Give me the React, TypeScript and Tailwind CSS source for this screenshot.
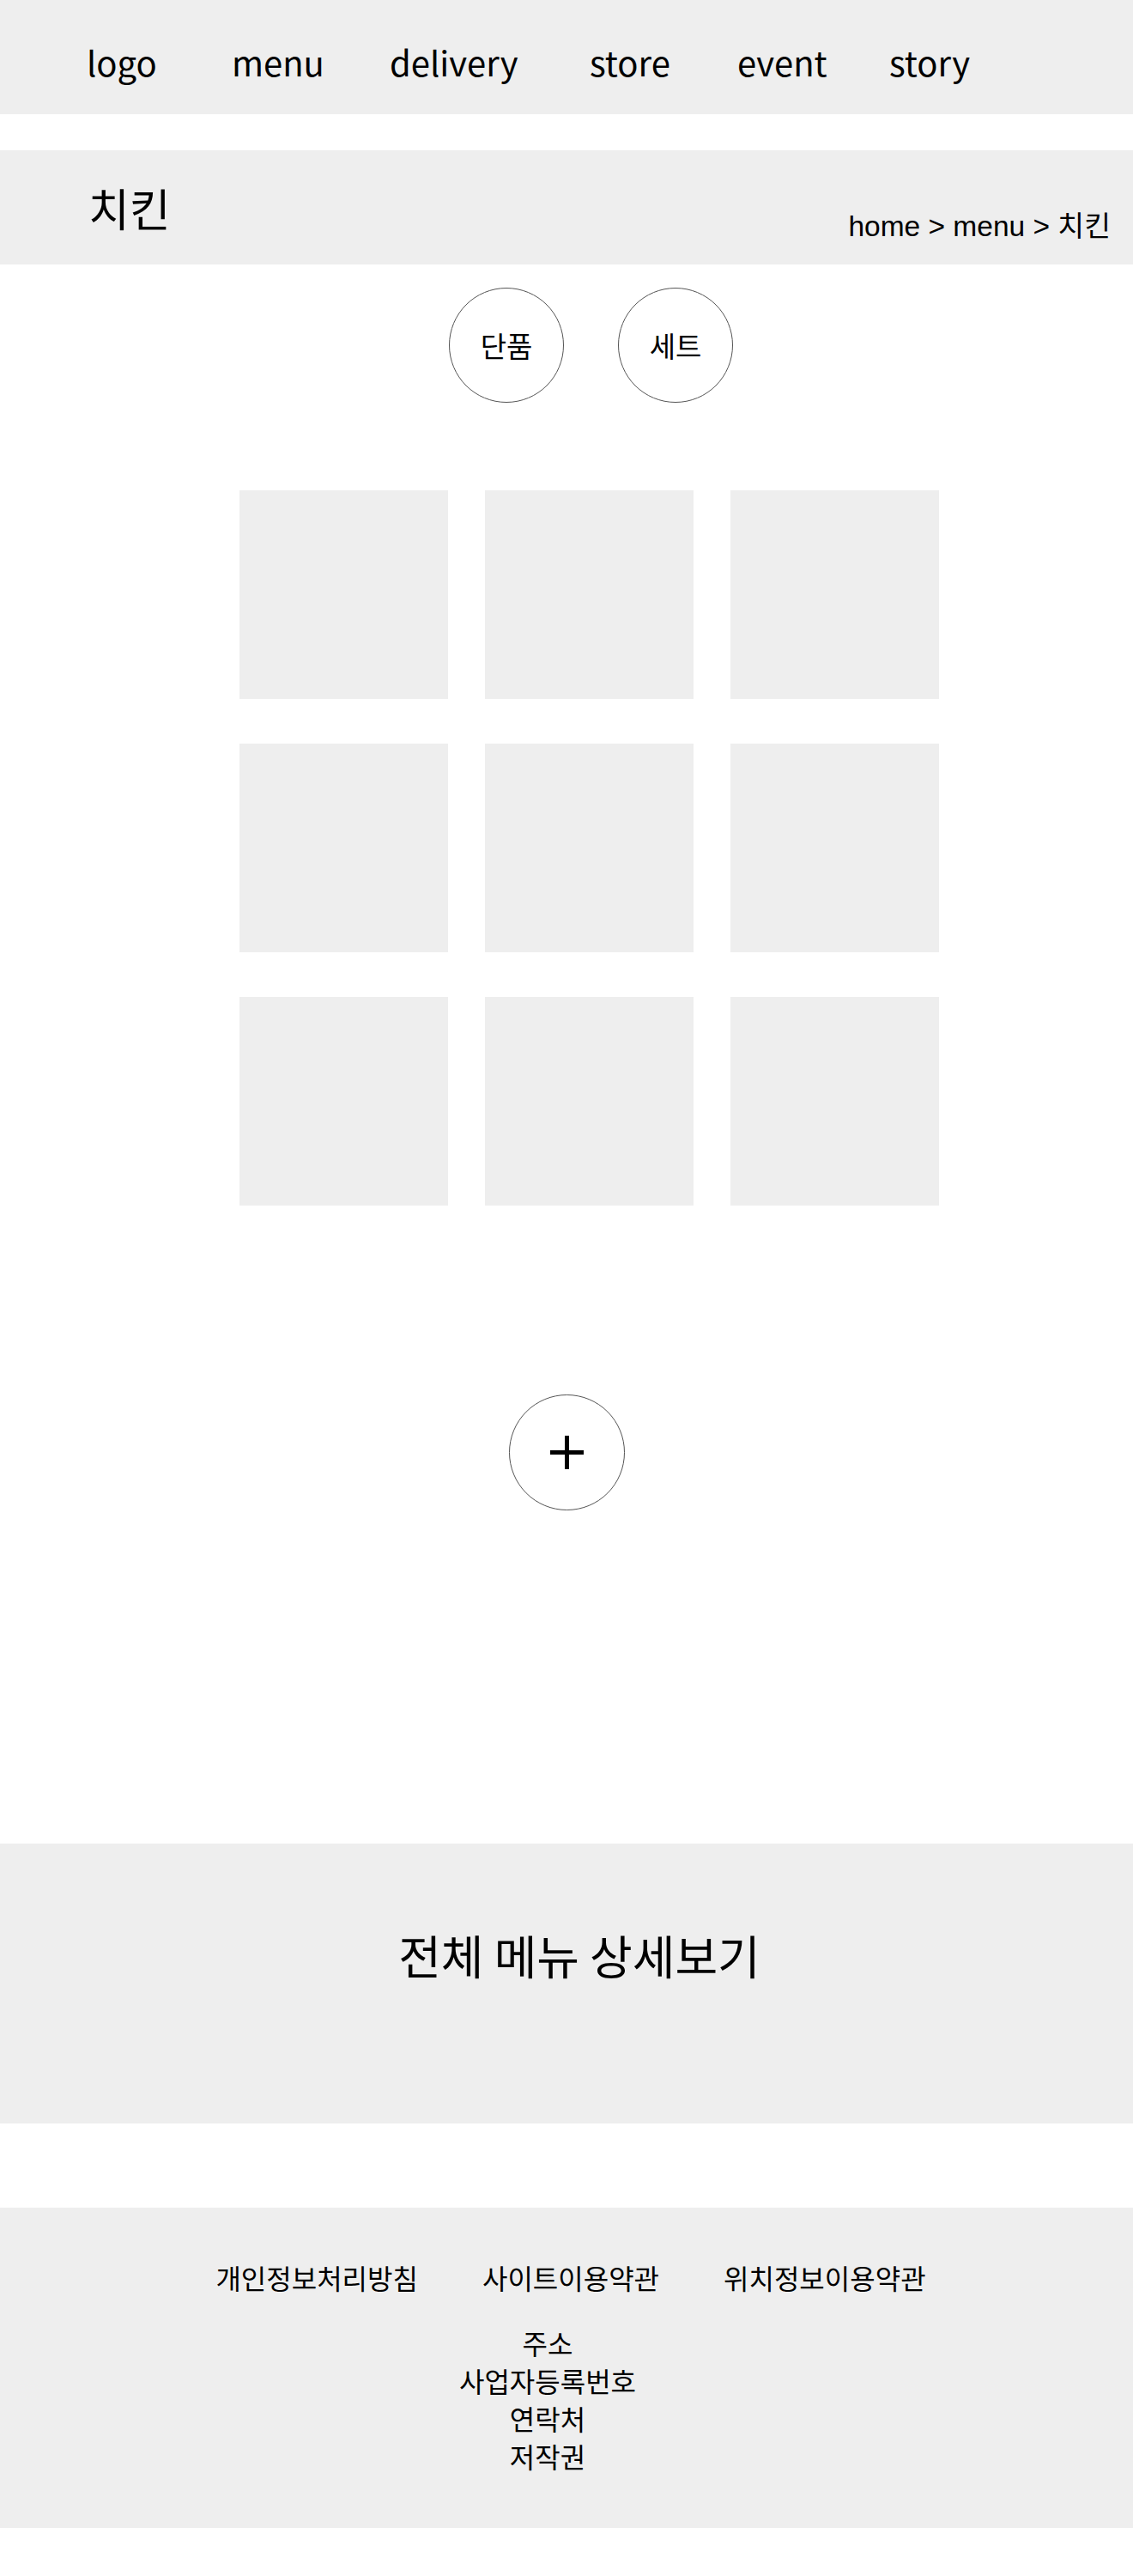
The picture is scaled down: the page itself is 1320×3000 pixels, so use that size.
const font = { fontFamily: '"Noto Sans CJK KR", "Noto Sans", sans-serif' }

const navItems = [
  { label: 'logo', w: 'w-[169px]' },
  { label: 'menu', w: 'w-[184px]' },
  { label: 'delivery', w: 'w-[233px]' },
  { label: 'store', w: 'w-[172px]' },
  { label: 'event', w: 'w-[177px]' },
  { label: 'story', w: 'w-[120px]' },
]

function Header() {
  return (
    <div className="h-[133px] bg-[#eeeeee] flex pl-[101px] pt-[42px]">
      {navItems.map((item) => (
        <a key={item.label} href="#" className={`${item.w} text-[40px] leading-[60px] text-black`}>
          {item.label}
        </a>
      ))}
    </div>
  )
}

function TitleBar() {
  return (
    <div className="mt-[42px] h-[133px] bg-[#eeeeee] flex justify-between">
      <h1 className="pl-[103px] pt-[41px] text-[52px] leading-[52px] font-normal">치킨</h1>
      <p
        className="pr-[26px] pt-[72px] text-[33.5px] leading-[34px]"
        style={{ fontFamily: '"Liberation Sans", "Noto Sans CJK KR", sans-serif' }}
      >
        home &gt; menu &gt; 치킨
      </p>
    </div>
  )
}

function Tabs() {
  return (
    <div className="mt-[27px] flex justify-center gap-[63px] pl-[57px]">
      {['단품', '세트'].map((t) => (
        <button
          key={t}
          className="w-[134px] h-[134px] rounded-full border border-[#555555] flex items-center justify-center text-[33px] leading-none"
        >
          {t}
        </button>
      ))}
    </div>
  )
}

function Grid() {
  return (
    <div className="mt-[102px] flex justify-center pl-[52px]">
      <div className="grid grid-cols-3 gap-x-[43px] gap-y-[52px]">
        {Array.from({ length: 9 }).map((_, i) => (
          <div key={i} className="w-[243px] h-[243px] bg-[#eeeeee]" />
        ))}
      </div>
    </div>
  )
}

function MoreButton() {
  return (
    <div className="mt-[220px] flex justify-center">
      <button className="w-[135px] h-[135px] rounded-full border border-[#555555] flex items-center justify-center">
        <svg width="39" height="39" viewBox="0 0 39 39" className="shrink-0">
          <rect x="17" y="0" width="5" height="39" fill="#000" />
          <rect x="0" y="17" width="39" height="5" fill="#000" />
        </svg>
      </button>
    </div>
  )
}

function FullMenu() {
  return (
    <div className="mt-[388px] h-[326px] bg-[#eeeeee] flex justify-center pl-[30px] pt-[103px]">
      <p className="text-[54px] leading-[54px]">전체 메뉴 상세보기</p>
    </div>
  )
}

function Footer() {
  return (
    <div className="mt-[98px] h-[373px] bg-[#eeeeee] pt-[65px]">
      <div className="flex justify-center gap-[75px] pl-[10px] text-[32px] leading-[32px]">
        <a href="#">개인정보처리방침</a>
        <a href="#">사이트이용약관</a>
        <a href="#">위치정보이용약관</a>
      </div>
      <ul className="mt-[38px] flex flex-col items-center pr-[44px] text-[32px] leading-[44px]">
        <li>주소</li>
        <li>사업자등록번호</li>
        <li>연락처</li>
        <li>저작권</li>
      </ul>
    </div>
  )
}

export default function App() {
  return (
    <div className="w-[1320px] min-h-[3000px] bg-white text-black" style={font}>
      <Header />
      <TitleBar />
      <Tabs />
      <Grid />
      <MoreButton />
      <FullMenu />
      <Footer />
    </div>
  )
}
